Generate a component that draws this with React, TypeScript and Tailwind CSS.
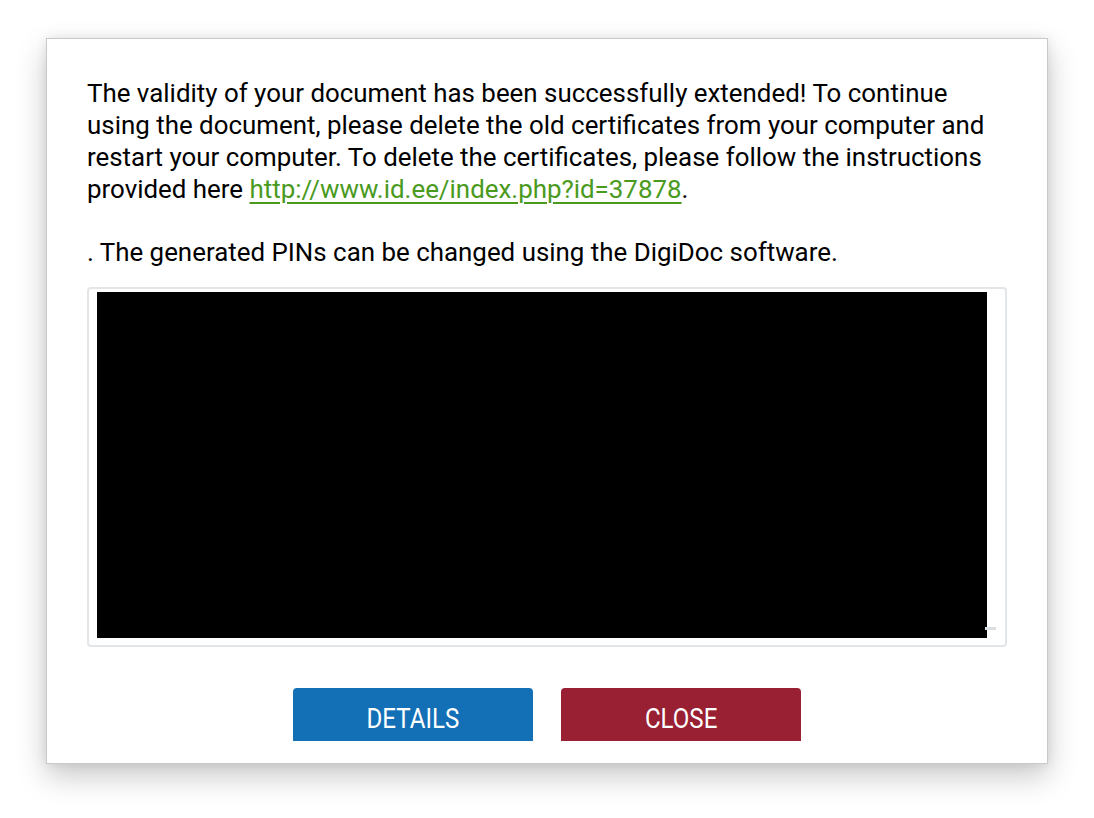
import React from "react";

export default function App() {
  return (
    <div className="w-[1094px] h-[818px] bg-white relative overflow-hidden" style={{ fontFamily: "Roboto, 'Noto Sans', sans-serif" }}>
      <div className="absolute left-[46px] top-[38px] w-[1002px] h-[726px] bg-white border border-[#c9c9c9] shadow-[0_12px_28px_rgba(0,0,0,0.22),0_0_10px_rgba(0,0,0,0.08)]">
        <div className="h-[702px] overflow-hidden px-[40px] pt-[38px]">
          <p className="w-[918px] text-[25.9px] leading-[32px] text-black">
            The validity of your document has been successfully extended! To continue using the document, please delete the old certificates from your computer and restart your computer. To delete the certificates, please follow the instructions provided here{" "}
            <a className="text-[#4a9a1e] underline underline-offset-[4px] decoration-[1.5px]">http://www.id.ee/index.php?id=37878</a>.
          </p>
          <p className="text-[25.9px] leading-[32px] text-black mt-[31px]">
            . The generated PINs can be changed using the DigiDoc software.
          </p>
          <div className="mt-[19px] w-[920px] h-[360px] border-2 border-[#e3e6e9] rounded-[4px] relative pl-[8px] pt-[3px]">
            <div className="w-[890px] h-[346px] bg-black" />
            <div className="absolute right-[9px] bottom-[15px] w-[11px] h-[3px] bg-[#dcdfe2]" />
          </div>
          <div className="mt-[41px] flex justify-center gap-[28px]">
            <button className="w-[240px] h-[60px] rounded-[4px] bg-[#136fb6] text-white text-[28px] flex items-start justify-center pt-[14px]">
              <span className="inline-block scale-x-[0.86] leading-[34px]">DETAILS</span>
            </button>
            <button className="w-[240px] h-[60px] rounded-[4px] bg-[#991f33] text-white text-[28px] flex items-start justify-center pt-[14px]">
              <span className="inline-block scale-x-[0.86] leading-[34px]">CLOSE</span>
            </button>
          </div>
        </div>
      </div>
    </div>
  );
}
